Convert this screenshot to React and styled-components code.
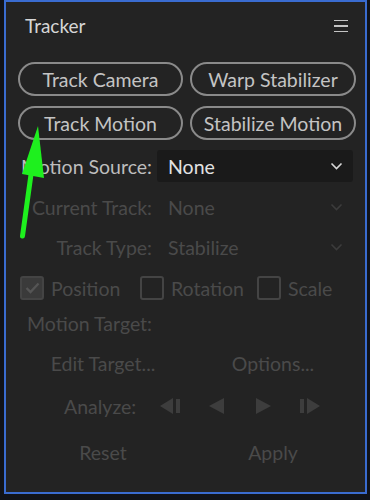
import React from 'react';
import styled, { createGlobalStyle } from 'styled-components';

const GlobalStyle = createGlobalStyle`
  html, body {
    margin: 0;
    padding: 0;
    background: #0f1116;
  }
  body {
    font-family: Lato, "Open Sans", "Liberation Sans", sans-serif;
  }
`;

const Page = styled.div`
  width: 370px;
  height: 500px;
  background: #111318;
  padding: 0 3px 0 4px;
  box-sizing: border-box;
  position: relative;
`;

const Frame = styled.div`
  height: 494px;
  box-sizing: border-box;
  border: 2px solid #3a6cd0;
  background: #232323;
  padding: 0 8px 0 12px;
  display: flex;
  flex-direction: column;
`;

const Header = styled.div`
  height: 46px;
  display: flex;
  align-items: center;
  justify-content: space-between;
  padding: 0 9px 0 7px;
`;

const Title = styled.div`
  font-size: 19px;
  color: #d6d6d6;
`;

const Hamburger = styled.div`
  width: 14px;
  display: flex;
  flex-direction: column;
  gap: 4px;
  margin-top: 2px;

  span {
    height: 1.6px;
    background: #c4c4c4;
  }
`;

const ButtonGrid = styled.div`
  margin-top: 14px;
  display: grid;
  grid-template-columns: 165px 166px;
  column-gap: 7px;
  row-gap: 10px;
`;

const PillButton = styled.div`
  height: 34px;
  box-sizing: border-box;
  border: 2px solid #8a8a8a;
  border-radius: 17px;
  display: flex;
  align-items: center;
  justify-content: center;
  color: #c4c4c4;
  font-size: 19.5px;
`;

const FieldRow = styled.div`
  display: grid;
  grid-template-columns: 134px 196px;
  column-gap: 5px;
  align-items: center;
  height: 32px;
  margin-top: ${p => p.$top}px;
`;

const Label = styled.div`
  text-align: right;
  font-size: 19.5px;
  color: ${p => (p.$disabled ? '#4a4a4a' : '#bdbdbd')};
  white-space: nowrap;
`;

const Select = styled.div`
  height: 32px;
  box-sizing: border-box;
  border-radius: 3px;
  background: ${p => (p.$disabled ? 'transparent' : '#1a1a1a')};
  display: flex;
  align-items: center;
  justify-content: space-between;
  padding: 0 10px 0 11px;
  font-size: 19.5px;
  color: ${p => (p.$disabled ? '#4a4a4a' : '#e2e2e2')};
`;

const CheckRow = styled.div`
  margin-top: 9px;
  height: 32px;
  display: flex;
  align-items: center;
  padding-left: 2px;
`;

const CheckItem = styled.div`
  display: flex;
  align-items: center;
  gap: 7px;
  width: ${p => p.$w}px;
  font-size: 19.5px;
  color: #4a4a4a;
`;

const Box = styled.div`
  width: 24px;
  height: 24px;
  box-sizing: border-box;
  border: 2px solid #444;
  border-radius: 3px;
  background: ${p => (p.$checked ? '#3a3a3a' : 'transparent')};
  display: flex;
  align-items: center;
  justify-content: center;
`;

const PlainText = styled.div`
  font-size: 19.5px;
  color: #4a4a4a;
  white-space: nowrap;
`;

const TargetLabel = styled(PlainText)`
  margin-top: 6px;
  height: 28px;
  line-height: 28px;
  padding-left: 9px;
`;

const TwoCol = styled.div`
  display: grid;
  grid-template-columns: 170px 170px;
  height: 34px;
  align-items: center;
  margin-top: ${p => p.$top}px;
  justify-items: center;
`;

const AnalyzeRow = styled.div`
  display: flex;
  align-items: center;
  height: 34px;
  margin-top: 9px;
  padding-left: 46px;
`;

const Controls = styled.div`
  display: flex;
  align-items: center;
  margin-left: 12px;
`;

const Ctl = styled.div`
  width: 46px;
  display: flex;
  justify-content: center;
`;

const Arrow = styled.svg`
  position: absolute;
  left: 0;
  top: 0;
  pointer-events: none;
`;

const Chevron = ({ color }) => (
  <svg width="13" height="8" viewBox="0 0 13 8">
    <path d="M1.5 1.5 L6.5 6.5 L11.5 1.5" fill="none" stroke={color} strokeWidth="1.6" />
  </svg>
);

const ctlColor = '#3d3d3d';

export default function App() {
  return (
    <>
      <GlobalStyle />
      <Page>
        <Frame>
          <Header>
            <Title>Tracker</Title>
            <Hamburger>
              <span />
              <span />
              <span />
            </Hamburger>
          </Header>

          <ButtonGrid>
            <PillButton>Track Camera</PillButton>
            <PillButton>Warp Stabilizer</PillButton>
            <PillButton>Track Motion</PillButton>
            <PillButton>Stabilize Motion</PillButton>
          </ButtonGrid>

          <FieldRow $top={10}>
            <Label>Motion Source:</Label>
            <Select>
              None
              <Chevron color="#d8d8d8" />
            </Select>
          </FieldRow>
          <FieldRow $top={9}>
            <Label $disabled>Current Track:</Label>
            <Select $disabled>
              None
              <Chevron color="#3c3c3c" />
            </Select>
          </FieldRow>
          <FieldRow $top={8}>
            <Label $disabled>Track Type:</Label>
            <Select $disabled>
              Stabilize
              <Chevron color="#3c3c3c" />
            </Select>
          </FieldRow>

          <CheckRow>
            <CheckItem $w={120}>
              <Box $checked>
                <svg width="15" height="12" viewBox="0 0 15 12">
                  <path d="M1.5 6 L5.5 10 L13.5 1.5" fill="none" stroke="#555" strokeWidth="2.4" />
                </svg>
              </Box>
              Position
            </CheckItem>
            <CheckItem $w={117}>
              <Box />
              Rotation
            </CheckItem>
            <CheckItem>
              <Box />
              Scale
            </CheckItem>
          </CheckRow>

          <TargetLabel>Motion Target:</TargetLabel>

          <TwoCol $top={8}>
            <PlainText>Edit Target...</PlainText>
            <PlainText>Options...</PlainText>
          </TwoCol>

          <AnalyzeRow>
            <PlainText>Analyze:</PlainText>
            <Controls>
              <Ctl>
                <svg width="22" height="16" viewBox="0 0 22 16">
                  <path d="M0 8 L13 0 L13 16 Z" fill={ctlColor} />
                  <rect x="16" y="1" width="4" height="14" fill={ctlColor} />
                </svg>
              </Ctl>
              <Ctl>
                <svg width="16" height="16" viewBox="0 0 16 16">
                  <path d="M0 8 L15 0 L15 16 Z" fill={ctlColor} />
                </svg>
              </Ctl>
              <Ctl>
                <svg width="16" height="16" viewBox="0 0 16 16">
                  <path d="M16 8 L1 0 L1 16 Z" fill={ctlColor} />
                </svg>
              </Ctl>
              <Ctl>
                <svg width="22" height="16" viewBox="0 0 22 16">
                  <rect x="2" y="1" width="4" height="14" fill={ctlColor} />
                  <path d="M22 8 L9 0 L9 16 Z" fill={ctlColor} />
                </svg>
              </Ctl>
            </Controls>
          </AnalyzeRow>

          <TwoCol $top={12}>
            <PlainText>Reset</PlainText>
            <PlainText>Apply</PlainText>
          </TwoCol>
        </Frame>

        <Arrow width="370" height="500" viewBox="0 0 370 500">
          <path d="M22.5 236 L33 160" stroke="#1ef01e" strokeWidth="5" strokeLinecap="round" fill="none" />
          <path d="M38 126 L44 178 L22 174 Z" fill="#1ef01e" />
        </Arrow>
      </Page>
    </>
  );
}
